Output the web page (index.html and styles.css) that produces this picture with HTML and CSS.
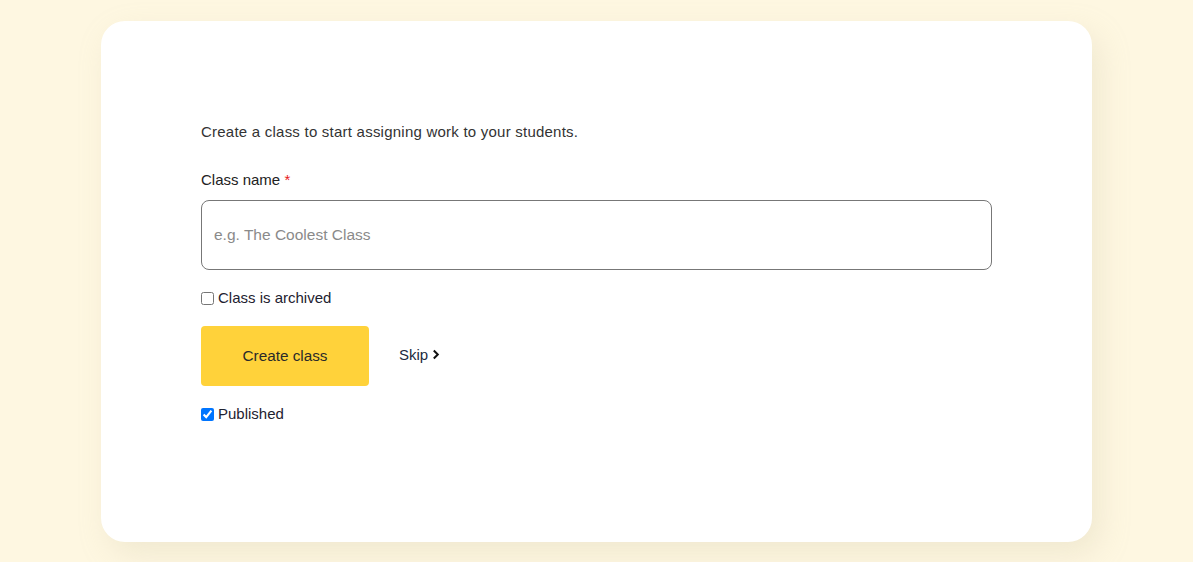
FILE: index.html
```html
<!DOCTYPE html>
<html lang="en">
<head>
<meta charset="utf-8">
<title>Create a class</title>
<link rel="stylesheet" href="styles.css">
</head>
<body>
<main class="card">
  <form class="form">
    <p class="intro">Create a class to start assigning work to your students.</p>
    <label class="label" for="classname">Class name <span class="req">*</span></label>
    <input class="input" id="classname" type="text" placeholder="e.g. The Coolest Class">
    <label class="check"><input type="checkbox"> Class is archived</label>
    <div class="actions">
      <button type="button" class="btn">Create class</button>
      <a class="skip" href="#">Skip <svg class="chev" width="8" height="11" viewBox="0 0 8 11"><path d="M1.8 1.5 L5.8 5.5 L1.8 9.5" fill="none" stroke="#111" stroke-width="2"/></svg></a>
    </div>
    <label class="check pub"><input type="checkbox" checked> Published</label>
  </form>
</main>
</body>
</html>
```
FILE: styles.css
```css
html, body {
  margin: 0;
  padding: 0;
}
body {
  background: #fef7e1;
  font-family: "Liberation Sans", Arial, sans-serif;
  color: #222;
  padding-top: 21px;
  height: 562px;
  box-sizing: border-box;
  overflow: hidden;
}
.card {
  width: 991px;
  height: 521px;
  margin: 0 auto;
  background: #fff;
  border-radius: 24px;
  box-shadow: 8px 12px 30px rgba(200, 190, 160, 0.25);
  box-sizing: border-box;
  padding: 101px 100px 0 100px;
}
.form {
  display: flex;
  flex-direction: column;
  align-items: flex-start;
}
.intro {
  margin: 0;
  font-size: 15px;
  line-height: 20px;
  letter-spacing: 0.23px;
  color: #333;
}
.label {
  margin-top: 28px;
  font-size: 15px;
  line-height: 20px;
  color: #222;
}
.req {
  color: #e8191c;
}
.input {
  margin-top: 10px;
  width: 100%;
  height: 70px;
  box-sizing: border-box;
  border: 1px solid #777;
  border-radius: 8px;
  padding: 0 12px;
  font-family: "Liberation Sans", Arial, sans-serif;
  font-size: 15.5px;
  color: #222;
  outline: none;
}
.input::placeholder {
  color: #8a8a8a;
}
.check {
  margin-top: 18px;
  display: flex;
  align-items: center;
  font-size: 15px;
  line-height: 20px;
  color: #1e2230;
}
.check input {
  margin: 0 4px 0 0;
  width: 13px;
  height: 13px;
}
.actions {
  margin-top: 18px;
  display: flex;
  align-items: center;
  gap: 30px;
}
.btn {
  width: 168px;
  height: 60px;
  border: none;
  border-radius: 4px;
  background: #ffd23a;
  font-family: "Liberation Sans", Arial, sans-serif;
  font-size: 15.3px;
  color: #2a2a2a;
}
.skip {
  display: flex;
  align-items: center;
  gap: 4px;
  font-size: 15px;
  color: #1b2a40;
  text-decoration: none;
  margin-top: -3px;
}
.pub {
  margin-top: 18px;
}
```
